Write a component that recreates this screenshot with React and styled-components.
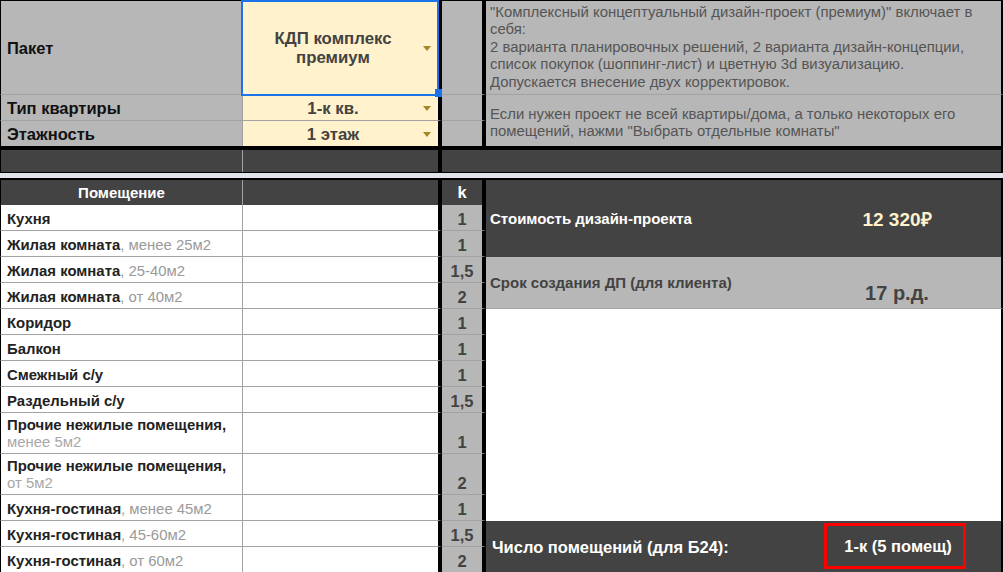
import React from "react";
import styled, { createGlobalStyle } from "styled-components";

const GlobalStyle = createGlobalStyle`
  html, body {
    margin: 0;
    padding: 0;
    background: #ffffff;
    overflow: hidden;
  }
  body {
    font-family: "Liberation Sans", Arial, sans-serif;
  }
`;

const DARK = "#434343";
const GRAY = "#b7b7b7";
const CREAM = "#fff2cc";
const LINE = "#a2a2a2";

const Sheet = styled.div`
  width: 1003px;
  height: 572px;
  overflow: hidden;
  background: #ffffff;
`;

const TopWrap = styled.div`
  position: relative;
  display: grid;
  grid-template-columns: 243px 199px 44px 517px;
  grid-template-rows: 94px 26px 25px;
  border-top: 1px solid #000;
  border-bottom: 4px solid #000;
`;

const Label = styled.div`
  background: ${GRAY};
  border-left: 1px solid #000;
  border-right: 1px solid ${LINE};
  border-bottom: ${(p) => (p.$last ? "none" : `1px solid ${LINE}`)};
  display: flex;
  align-items: center;
  padding: 1px 0 0 6px;
  font-size: 16.5px;
  font-weight: bold;
  color: #111;
`;

const Select = styled.div`
  background: ${CREAM};
  border-right: 4px solid #000;
  border-bottom: ${(p) => (p.$last ? "none" : `1px solid ${LINE}`)};
  display: flex;
  align-items: center;
  padding: 1px 7px 0 0;
  font-size: 16.8px;
  font-weight: bold;
  color: ${DARK};
`;

const SelectText = styled.div`
  flex: 1;
  text-align: center;
  line-height: 19px;
`;

const Arrow = styled.span`
  width: 0;
  height: 0;
  border-left: 4.5px solid transparent;
  border-right: 4.5px solid transparent;
  border-top: 5px solid #a68526;
`;

const KTop = styled.div`
  background: ${GRAY};
  border-right: 4px solid #000;
  border-bottom: ${(p) => (p.$last ? "none" : `1px solid ${LINE}`)};
`;

const Desc = styled.div`
  grid-column: 4;
  grid-row: ${(p) => p.$row};
  background: ${GRAY};
  border-right: 2px solid #000;
  border-bottom: ${(p) => (p.$line ? `1px solid ${LINE}` : "none")};
  display: flex;
  align-items: center;
  padding: ${(p) => (p.$line ? "0 4px" : "5px 4px 0")};
  font-size: 14.9px;
  line-height: 17.5px;
  color: #555555;
  white-space: nowrap;
`;

const Selection = styled.div`
  position: absolute;
  left: 241px;
  top: -1px;
  width: 198px;
  height: 96px;
  box-sizing: border-box;
  border: 2px solid #1a73e8;
  pointer-events: none;
`;

const Handle = styled.div`
  position: absolute;
  left: 435px;
  top: 88px;
  width: 7px;
  height: 8px;
  background: #1a73e8;
`;

const DarkBand = styled.div`
  display: grid;
  grid-template-columns: 243px 199px 561px;
  height: 22px;
  border-bottom: 1px solid #000;
`;

const BandCell = styled.div`
  background: ${DARK};
  border-left: ${(p) => (p.$first ? "1px solid #000" : "none")};
  border-right: ${(p) => p.$right};
`;

const Gap = styled.div`
  height: 5px;
  background: #e1e4ea;
`;

const BottomGrid = styled.div`
  display: grid;
  grid-template-columns: 243px 199px 44px 517px;
  grid-template-rows: 25px repeat(8, 26px) 41px 41px 26px 26px 26px;
  border-top: 2px solid #000;
`;

const HeadCell = styled.div`
  background: ${DARK};
  color: #ffffff;
  font-size: ${(p) => p.$size || "15px"};
  font-weight: bold;
  display: flex;
  align-items: center;
  justify-content: center;
  border-left: ${(p) => (p.$first ? "1px solid #000" : "none")};
  border-right: ${(p) => p.$right || "none"};
`;

const RoomCell = styled.div`
  background: #ffffff;
  border-left: 1px solid #000;
  border-right: 1px solid ${LINE};
  border-bottom: 1px solid ${LINE};
  display: flex;
  align-items: flex-end;
  padding: 0 4px 2px 6px;
  font-size: 14.9px;
  line-height: 17px;
  color: #222222;
`;

const RoomName = styled.div`
  font-weight: bold;
  white-space: nowrap;
`;

const Note = styled.span`
  font-weight: normal;
  color: #9a9a9a;
`;

const SubNote = styled.div`
  font-weight: normal;
  color: #a8a8a8;
`;

const EmptyCell = styled.div`
  background: #ffffff;
  border-right: 4px solid #000;
  border-bottom: 1px solid ${LINE};
`;

const KCell = styled.div`
  background: ${GRAY};
  border-right: 4px solid #000;
  border-bottom: 1px solid ${LINE};
  display: flex;
  align-items: flex-end;
  justify-content: center;
  padding-bottom: 2px;
  font-size: 16.5px;
  line-height: 17px;
  font-weight: bold;
  color: ${DARK};
`;

const Block = styled.div`
  grid-column: 4;
  grid-row: ${(p) => p.$row};
  background: ${(p) => p.$bg};
  border-right: 2px solid #000;
  border-bottom: ${(p) => (p.$line ? `1px solid ${LINE}` : "none")};
  display: grid;
  grid-template-columns: 1fr 208px;
  align-items: center;
`;

const BlockLabel = styled.div`
  padding-left: ${(p) => p.$pad || "4px"};
  font-size: ${(p) => p.$size || "15px"};
  font-weight: bold;
  color: ${(p) => p.$color};
  white-space: nowrap;
`;

const BlockValue = styled.div`
  text-align: center;
  font-size: ${(p) => p.$size || "19px"};
  font-weight: bold;
  color: ${(p) => p.$color};
  align-self: ${(p) => p.$align || "center"};
  padding-bottom: ${(p) => p.$pb || "0"};
`;

const CountBox = styled.div`
  justify-self: center;
  margin-left: -4px;
  margin-top: 2px;
  align-self: start;
  width: 142px;
  height: 46px;
  box-sizing: border-box;
  border: 3px solid #ff0000;
  padding-left: 6px;
  display: flex;
  align-items: center;
  justify-content: center;
  font-size: 16.5px;
  font-weight: bold;
  color: #ffffff;
  white-space: nowrap;
`;

const rooms = [
  { name: "Кухня", k: "1" },
  { name: "Жилая комната", note: ", менее 25м2", k: "1" },
  { name: "Жилая комната", note: ", 25-40м2", k: "1,5" },
  { name: "Жилая комната", note: ", от 40м2", k: "2" },
  { name: "Коридор", k: "1" },
  { name: "Балкон", k: "1" },
  { name: "Смежный с/у", k: "1" },
  { name: "Раздельный с/у", k: "1,5" },
  { name: "Прочие нежилые помещения,", sub: "менее 5м2", k: "1" },
  { name: "Прочие нежилые помещения,", sub: "от 5м2", k: "2" },
  { name: "Кухня-гостиная", note: ", менее 45м2", k: "1" },
  { name: "Кухня-гостиная", note: ", 45-60м2", k: "1,5" },
  { name: "Кухня-гостиная", note: ", от 60м2", k: "2" },
];

const App = () => {
  return (
    <Sheet>
      <GlobalStyle />
      <TopWrap>
        <Label>Пакет</Label>
        <Select>
          <SelectText>
            КДП комплекс
            <br />
            премиум
          </SelectText>
          <Arrow />
        </Select>
        <KTop />
        <Desc $row="1" $line>
          <div>
            "Комплексный концептуальный дизайн-проект (премиум)" включает в
            <br />
            себя:
            <br />
            2 варианта планировочных решений, 2 варианта дизайн-концепции,
            <br />
            список покупок (шоппинг-лист) и цветную 3d визуализацию.
            <br />
            Допускается внесение двух корректировок.
          </div>
        </Desc>

        <Label>Тип квартиры</Label>
        <Select>
          <SelectText>1-к кв.</SelectText>
          <Arrow />
        </Select>
        <KTop />
        <Desc $row="2 / 4">
          <div>
            Если нужен проект не всей квартиры/дома, а только некоторых его
            <br />
            помещений, нажми "Выбрать отдельные комнаты"
          </div>
        </Desc>

        <Label $last>Этажность</Label>
        <Select $last>
          <SelectText>1 этаж</SelectText>
          <Arrow />
        </Select>
        <KTop $last />

        <Selection />
        <Handle />
      </TopWrap>

      <DarkBand>
        <BandCell $first $right={`1px solid ${LINE}`} />
        <BandCell $right="4px solid #000" />
        <BandCell $right="2px solid #000" />
      </DarkBand>

      <Gap />

      <BottomGrid>
        <HeadCell $first $right={`1px solid ${LINE}`}>
          Помещение
        </HeadCell>
        <HeadCell $right="4px solid #000" />
        <HeadCell $right="4px solid #000" $size="16.5px">
          k
        </HeadCell>
        <Block $row="1 / 4" $bg={DARK}>
          <BlockLabel $color="#ffffff">Стоимость дизайн-проекта</BlockLabel>
          <BlockValue $color={CREAM}>12 320₽</BlockValue>
        </Block>
        <Block $row="4 / 6" $bg={GRAY} $line>
          <BlockLabel $color={DARK}>Срок создания ДП (для клиента)</BlockLabel>
          <BlockValue $color={DARK} $align="end" $pb="3px" $size="20px">
            17 р.д.
          </BlockValue>
        </Block>
        <Block $row="6 / 13" $bg="#ffffff" />
        <Block $row="13 / 15" $bg={DARK}>
          <BlockLabel $color="#ffffff" $pad="6px" $size="16.5px">
            Число помещений (для Б24):
          </BlockLabel>
          <CountBox>1-к (5 помещ)</CountBox>
        </Block>

        {rooms.map((r, i) => (
          <React.Fragment key={i}>
            <RoomCell style={{ gridRow: i + 2 }}>
              <RoomName>
                {r.name}
                {r.note && <Note>{r.note}</Note>}
                {r.sub && <SubNote>{r.sub}</SubNote>}
              </RoomName>
            </RoomCell>
            <EmptyCell style={{ gridRow: i + 2 }} />
            <KCell style={{ gridRow: i + 2 }}>{r.k}</KCell>
          </React.Fragment>
        ))}
      </BottomGrid>
    </Sheet>
  );
};

export default App;
